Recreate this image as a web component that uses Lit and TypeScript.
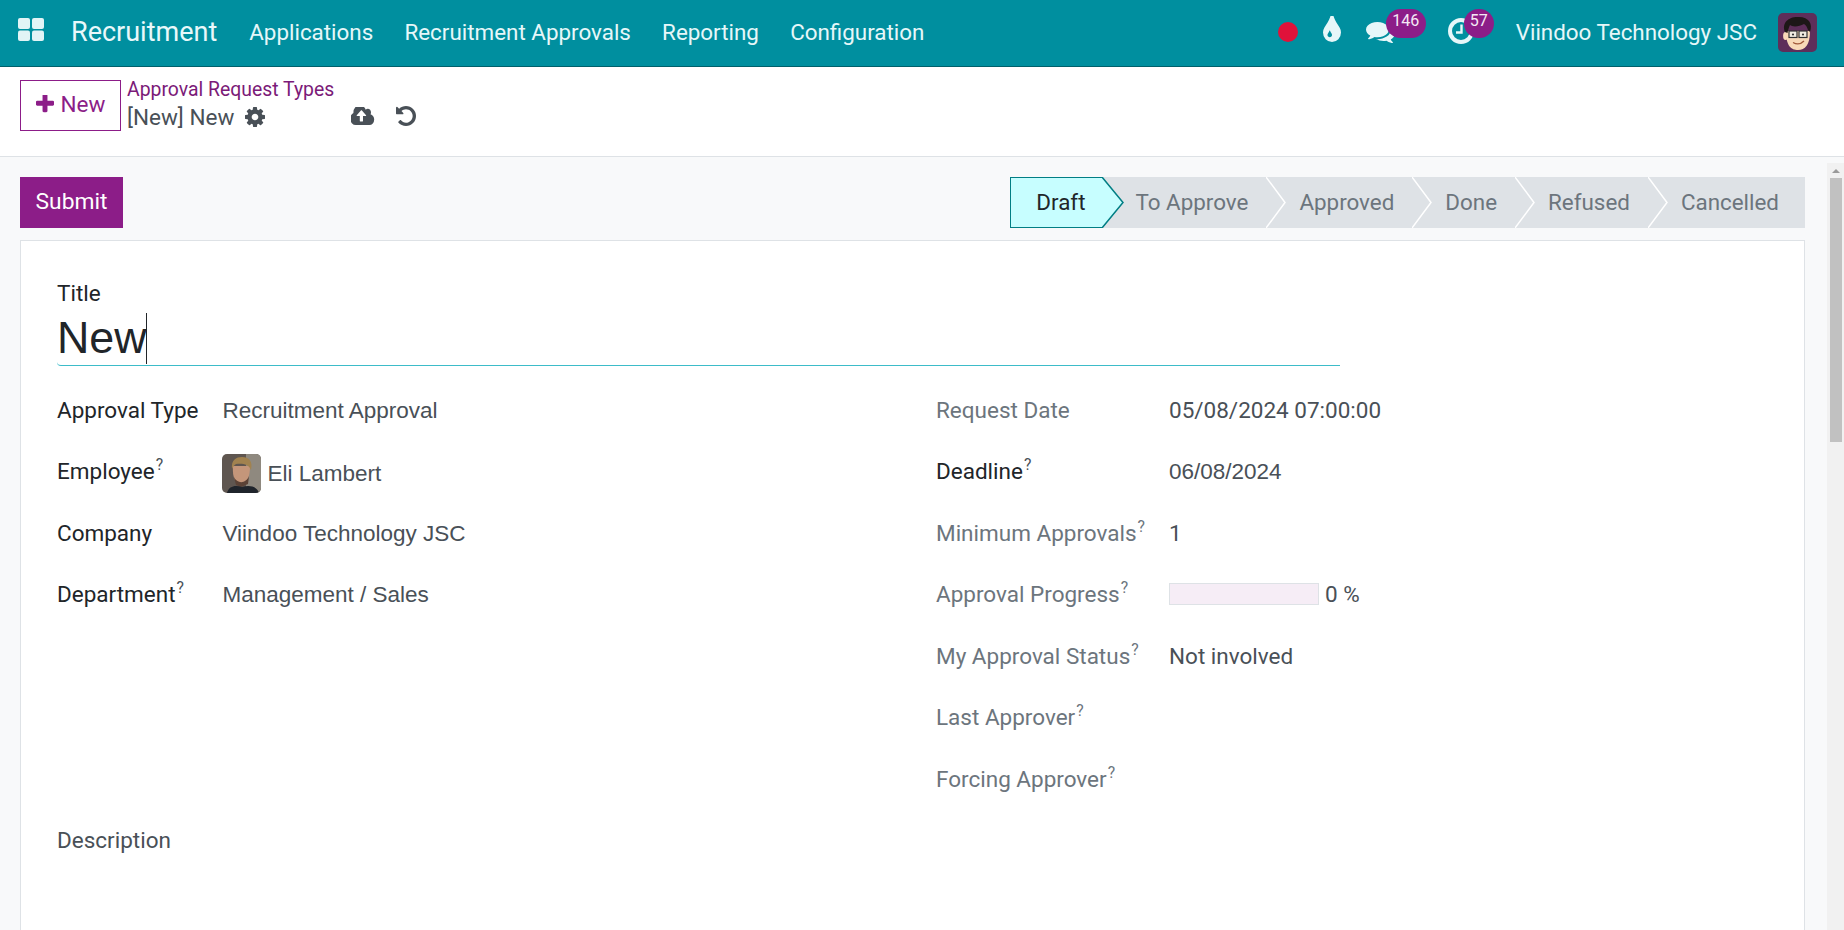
import { LitElement, html, css, svg } from "lit";
import { customElement } from "lit/decorators.js";

const Q = html`<sup class="q">?</sup>`;

@customElement("app-root")
export class AppRoot extends LitElement {
  static styles = css`
    :host { display: flex; flex-direction: column; width: 1844px; height: 930px; overflow: hidden; font-family: Roboto, sans-serif; font-size: 22.5px; color: #212529; background: #fff; }
    svg { display: block; }
    .nav { height: 66px; flex: none; box-sizing: content-box; background: #008f9f; border-bottom: 1px solid #00606b; display: flex; align-items: center; color: #e6f7f9; font-size: 22.4px; }
    .apps { margin-left: 18px; width: 26px; height: 23px; margin-top: -7px; }
    .brand { font-size: 27px; margin-left: 27px; margin-right: 16.4px; color: #e8f8fa; margin-top: -2px; }
    .menu { margin: -2px 0 0 0; padding: 0 15.6px; }
    .spacer { flex: 1; }
    .rec { width: 20px; height: 20px; border-radius: 50%; background: #e0123a; margin-top: -2px; }
    .drop { margin-left: 25px; margin-top: -8px; }
    .ic { position: relative; }
    .chat { margin-left: 25px; margin-top: -3px; }
    .chat .badge { top: -11px; }
    .clock { margin-left: 53px; margin-top: -4px; }
    .company { margin-left: 42px; margin-top: -2px; }
    .avatar { margin: -1px 27px 0 21px; border-radius: 5px; }
    .badge { position: absolute; background: #8c1d88; color: #f5e9f5; border-radius: 15px; font-size: 16px; height: 29px; line-height: 24px; text-align: center; }
    .b1 { left: 20px; top: -12px; width: 40px; }
    .b2 { left: 16px; top: -9px; width: 30px; }
    .cp { height: 89px; flex: none; background: #fff; border-bottom: 1px solid #dee2e6; display: flex; align-items: flex-start; padding-left: 20px; }
    .newbtn { margin-top: 13px; width: 101px; height: 51px; box-sizing: border-box; border: 1px solid #8c1d88; color: #8c1d88; display: flex; align-items: center; justify-content: center; gap: 7px; padding-bottom: 4px; }
    .crumbs { margin: 10px 0 0 6px; }
    .crumb1 { color: #7b1a78; font-size: 19.4px; line-height: 26px; }
    .crumb2 { display: flex; align-items: center; color: #495057; line-height: 28px; }
    .gear { margin-left: 11px; }
    .cloud { margin-left: 86px; margin-top: -3px; }
    .undo { margin-left: 21px; margin-top: -3px; }
    .body { flex: 1; display: flex; background: #f8f9fa; min-height: 0; }
    .main { flex: 1; min-width: 0; padding: 20px 22px 0 20px; }
    .bar { display: flex; justify-content: space-between; height: 51px; }
    .submit { width: 103px; height: 51px; background: #8c1d88; color: #fff; display: flex; align-items: center; justify-content: center; font-size: 22.8px; padding-bottom: 2px; box-sizing: border-box; }
    .status { display: flex; height: 51px; color: #6c757d; background: #dee2e6; font-size: 22.4px; }
    .st { position: relative; display: flex; align-items: center; padding: 0 18px 2px 33px; box-sizing: border-box; }
    .st svg { position: absolute; top: 0; right: -20px; width: 20px; height: 51px; z-index: 1; }
    .st.first { color: #212529; background: #c7feff; border: 1px solid #017e84; border-right: 0; padding: 0 17px 2px 25px; }
    .st.first svg { top: -1px; width: 22px; right: -22px; }
    .st.last { padding-right: 26px; }
    .card { margin-top: 12px; background: #fff; border: 1px solid #dee2e6; height: 700px; padding: 0 36px; box-sizing: border-box; }
    .tlabel { margin-top: 37px; line-height: 30px; }
    .title { width: 1283px; height: 54px; box-sizing: border-box; border-bottom: 1px solid #3dbcc9; border-radius: 0 0 0 4px; font-family: "Liberation Sans", sans-serif; font-size: 44.8px; margin-top: 4px; padding-bottom: 2px; color: #212529; display: flex; align-items: center; }
    .caret { width: 1px; height: 51px; background: #212529; margin-left: -1px; margin-top: 2px; }
    .cols { display: grid; grid-template-columns: 879px 1fr; margin-top: 13px; }
    .row { display: flex; height: 61.5px; align-items: center; }
    .lab { width: 165.5px; flex: none; }
    .right .lab { width: 233px; }
    .lab.muted { color: #6c757d; }
    .q { font-size: 15.7px; line-height: 0; vertical-align: 9px; margin-left: 1px; color: #495057; }
    .muted .q { color: #6c757d; }
    .val { color: #495057; font-family: "Liberation Sans", sans-serif; padding-top: 2px; }
    .val.r { font-family: Roboto, sans-serif; padding-top: 0; }
    .emp { display: flex; align-items: center; }
    .photo { width: 39px; height: 39px; border-radius: 5px; margin: 3px 6px 0 -1px; }
    .empname { margin-top: 3px; margin-left: 1px; }
    .progwrap { display: flex; align-items: center; }
    .prog { width: 150px; height: 22px; box-sizing: border-box; background: #f6edf6; border: 1px solid #dee2e6; margin-right: 6px; }
    .desc { color: #495057; line-height: 30px; margin-top: 15px; }
    .sb { width: 17px; flex: none; background: #f1f1f1; margin-top: 6px; display: flex; flex-direction: column; align-items: center; }
    .thumb { width: 12px; height: 264px; background: #c1c1c1; margin-top: 5px; }
    .arrow { margin-top: 6px; width: 0; height: 0; border: 4px solid transparent; border-top: 0; border-bottom: 4px solid #9a9a9a; }
  `;

  chevron(fill: string, stroke: string, w: number) {
    return html`<svg viewBox="0 0 ${w} 51" preserveAspectRatio="none">${svg`<path d="M0 0 L${w - 1} 25.5 L0 51 Z" fill="${fill}"/><path d="M0 0 L${w - 1} 25.5 L0 51" fill="none" stroke="${stroke}" stroke-width="1.5"/>`}</svg>`;
  }

  row(label: unknown, val: unknown, cls = "", lcls = "") {
    return html`<div class="row"><div class="lab ${lcls}">${label}</div><div class="val ${cls}">${val}</div></div>`;
  }

  render() {
    const states = ["To Approve", "Approved", "Done", "Refused", "Cancelled"];
    return html`
      <div class="nav">
        <svg class="apps" viewBox="0 0 26 23"><g fill="#e2f4f6"><rect x="0" y="0" width="12" height="11" rx="2"/><rect x="14" y="0" width="12" height="11" rx="2"/><rect x="0" y="12.5" width="12" height="10.5" rx="2"/><rect x="14" y="12.5" width="12" height="10.5" rx="2"/></g></svg>
        <div class="brand">Recruitment</div>
        <div class="menu">Applications</div>
        <div class="menu">Recruitment Approvals</div>
        <div class="menu">Reporting</div>
        <div class="menu">Configuration</div>
        <div class="spacer"></div>
        <div class="rec"></div>
        <svg class="drop" width="18" height="26" viewBox="384 128 1024 1408" preserveAspectRatio="none"><path fill="#e6f7f9" d="M896 1152q0-36-20-69-1-1-15.5-22.5t-25.5-38-25-44-21-50.5q-4-16-21-16t-21 16q-7 23-21 50.5t-25 44-25.5 38-15.5 22.5q-20 33-20 69 0 53 37.5 90.5t90.5 37.5 90.5-37.5 37.5-90.5zm512-128q0 212-150 362t-362 150-362-150-150-362q0-145 81-275 6-9 62.5-90.5t101-151 99.5-178 83-201.5q9-30 34-47t51-17 51.5 17 33.5 47q28 93 83 201.5t99.5 178 101 151 62.5 90.5q81 127 81 275z"/></svg>
        <div class="ic chat">
          <svg width="29" height="23" viewBox="0 128 1792 1536" preserveAspectRatio="none"><path fill="#e6f7f9" d="M1408 768q0 139-94 257t-256.5 186.5-353.5 68.5q-86 0-176-16-124 88-278 128-36 9-86 16h-3q-11 0-20.5-8t-11.5-21q-1-3-1-6.5t.5-6.5 2-6l2.5-5 3.5-5.5 4-5 4.5-5 4-4.5q5-6 23-25t26-29.5 22.5-29 25-38.5 20.5-44q-124-72-195-177t-71-224q0-139 94-257t256.5-186.5 353.5-68.5 353.5 68.5 256.5 186.5 94 257zm384 256q0 120-71 224.5t-195 176.5q10 24 20.5 44t25 38.5 22.5 29 26 29.5 23 25q1 1 4 4.5t4.5 5 4 5 3.5 5.5l2.5 5 2 6 .5 6.5-1 6.5q-3 14-13 22t-22 7q-50-7-86-16-154-40-278-128-90 16-176 16-271 0-472-132 58 4 88 4 161 0 309-45t264-129q125-92 192-212t67-254q0-77-23-152 129 71 204 178t75 230z"/></svg>
          <div class="badge b1">146</div>
        </div>
        <div class="ic clock">
          <svg width="26" height="26" viewBox="0 0 26 26"><circle cx="13" cy="13" r="11" fill="none" stroke="#e6f7f9" stroke-width="4"/><path d="M13.5 6.5 V14.5 H8" fill="none" stroke="#e6f7f9" stroke-width="2.4"/></svg>
          <div class="badge b2">57</div>
        </div>
        <div class="company">Viindoo Technology JSC</div>
        <svg class="avatar" width="39" height="39" viewBox="0 0 39 39">
          <rect width="39" height="39" fill="#5e2e5a"/>
          <path d="M8 18 C8 33 13 37 20 37 C27 37 32 32 32 18 Z" fill="#f8d9b8"/>
          <ellipse cx="7.5" cy="23" rx="2.4" ry="4" fill="#f8d9b8"/>
          <path d="M7 19 C3 9 12 3 21 4 C31 4 35 11 32 19 L30 17 C29 14 28 12 26 11 C21 14 14 14 12 12 C11 14 10 17 9.5 20 Z" fill="#1d1717"/>
          <rect x="11" y="18" width="8" height="6.5" fill="#f1ece2" stroke="#333" stroke-width="1.2"/><rect x="21" y="18" width="8" height="6.5" fill="#f1ece2" stroke="#333" stroke-width="1.2"/>
          <circle cx="15" cy="21.5" r="1.1" fill="#333"/><circle cx="25" cy="21.5" r="1.1" fill="#333"/>
          <path d="M15 29.5 Q21 33 26 28" fill="none" stroke="#a0583a" stroke-width="1.3"/>
        </svg>
      </div>
      <div class="cp">
        <div class="newbtn"><svg width="18" height="18" viewBox="192 192 1408 1408"><path fill="#8c1d88" d="M1600 736v192q0 40-28 68t-68 28h-416v416q0 40-28 68t-68 28h-192q-40 0-68-28t-28-68v-416h-416q-40 0-68-28t-28-68v-192q0-40 28-68t68-28h416v-416q0-40 28-68t68-28h192q40 0 68 28t28 68v416h416q40 0 68 28t28 68z"/></svg><span>New</span></div>
        <div class="crumbs">
          <div class="crumb1">Approval Request Types</div>
          <div class="crumb2"><span>[New] New</span>
            <svg class="gear" width="20" height="20" viewBox="128 128 1536 1536"><path fill="#495057" d="M1152 896q0-106-75-181t-181-75-181 75-75 181 75 181 181 75 181-75 75-181zm512-109v222q0 12-8 23t-20 13l-185 28q-19 54-39 91 35 50 107 138 10 12 10 25t-9 23q-27 37-99 108t-94 71q-12 0-26-9l-138-108q-44 23-91 38-16 136-29 186-7 28-36 28h-222q-14 0-24.5-8.5t-11.5-21.5l-28-184q-49-16-90-37l-141 107q-10 9-25 9-14 0-25-11-126-114-165-168-7-10-7-23 0-12 8-23 15-21 51-66.5t54-70.5q-27-50-41-99l-183-27q-13-2-21-12.5t-8-23.5v-222q0-12 8-23t19-13l186-28q14-46 39-92-40-57-107-138-10-12-10-24 0-10 9-23 26-36 98.5-107.5t94.5-71.5q13 0 26 10l138 107q44-23 91-38 16-136 29-186 7-28 36-28h222q14 0 24.5 8.5t11.5 21.5l28 184q49 16 90 37l142-107q9-9 24-9 13 0 25 10 129 119 165 170 7 8 7 22 0 12-8 23-15 21-51 66.5t-54 70.5q26 50 41 98l183 28q13 2 21 12.5t8 23.5z"/></svg>
            <svg class="cloud" width="24" height="18" viewBox="0 256 1920 1280" preserveAspectRatio="none"><path fill="#495057" d="M1216 864q0-14-9-23l-352-352q-9-9-23-9t-23 9l-351 351q-10 12-10 24 0 14 9 23t23 9h224v352q0 13 9.5 22.5t22.5 9.5h192q13 0 22.5-9.5t9.5-22.5v-352h224q13 0 22.5-9.5t9.5-22.5zm640 288q0 159-112.5 271.5t-271.5 112.5h-1088q-185 0-316.5-131.5t-131.5-316.5q0-130 70-240t188-165q-2-30-2-43 0-212 150-362t362-150q156 0 285.5 87t188.5 231q71-62 166-62 106 0 181 75t75 181q0 76-41 138 130 31 213.5 135.5t83.5 238.5z"/></svg>
            <svg class="undo" width="20" height="20" viewBox="128 128 1536 1536"><path fill="#495057" d="M1664 896q0 156-61 298t-164 245-245 164-298 61q-172 0-327-72.5t-264-204.5q-7-10-6.5-22.5t8.5-20.5l137-138q10-9 25-9 16 2 23 12 73 95 179 147t225 52q104 0 198.5-40.5t163.5-109.5 109.5-163.5 40.5-198.5-40.5-198.5-109.5-163.5-163.5-109.5-198.5-40.5q-98 0-188 35.5t-160 101.5l137 138q31 30 14 69-17 40-59 40h-448q-26 0-45-19t-19-45v-448q0-42 40-59 39-17 69 14l130 129q107-101 244.5-156.5t284.5-55.5q156 0 298 61t245 164 164 245 61 298z"/></svg>
          </div>
        </div>
      </div>
      <div class="body">
        <div class="main">
          <div class="bar">
            <div class="submit">Submit</div>
            <div class="status">
              <div class="st first">Draft${this.chevron("#c7feff", "#017e84", 22)}</div>
              ${states.map((s, i) => html`<div class="st ${i === 4 ? "last" : ""}">${s}${i < 4 ? this.chevron("#dee2e6", "#fff", 20) : ""}</div>`)}
            </div>
          </div>
          <div class="card">
            <div class="tlabel">Title</div>
            <div class="title">New<span class="caret"></span></div>
            <div class="cols">
              <div>
                ${this.row("Approval Type", "Recruitment Approval")}
                ${this.row(html`Employee${Q}`, html`<div class="emp"><svg class="photo" viewBox="0 0 39 39">
                  <rect width="39" height="39" fill="#5f5650"/><rect x="24" width="15" height="39" fill="#8f897f"/>
                  <path d="M11 12 C10 24 14 30 19 30 C25 30 28 23 28 12 Z" fill="#c4967a"/>
                  <path d="M10 15 C9 6 14 3 20 3 C27 3 31 7 29 16 C27 10 20 9 14 10 C12 11 11 13 10 15 Z" fill="#a1824f"/>
                  <path d="M12 23 C15 30 24 30 27 22 L26 30 L19 33 L14 31 Z" fill="#5b4236"/>
                  <path d="M5 39 C7 32 13 31 20 33 C27 31 35 32 37 39 Z" fill="#1f242b"/>
                </svg><span class="empname">Eli Lambert</span></div>`)}
                ${this.row("Company", "Viindoo Technology JSC")}
                ${this.row(html`Department${Q}`, "Management / Sales")}
              </div>
              <div class="right">
                ${this.row("Request Date", "05/08/2024 07:00:00", "r", "muted")}
                ${this.row(html`Deadline${Q}`, "06/08/2024")}
                ${this.row(html`Minimum Approvals${Q}`, "1", "r", "muted")}
                ${this.row(html`Approval Progress${Q}`, html`<div class="progwrap"><div class="prog"></div>0 %</div>`, "r", "muted")}
                ${this.row(html`My Approval Status${Q}`, "Not involved", "r", "muted")}
                ${this.row(html`Last Approver${Q}`, "", "r", "muted")}
                ${this.row(html`Forcing Approver${Q}`, "", "r", "muted")}
              </div>
            </div>
            <div class="desc">Description</div>
          </div>
        </div>
        <div class="sb"><div class="arrow"></div><div class="thumb"></div></div>
      </div>
    `;
  }
}
